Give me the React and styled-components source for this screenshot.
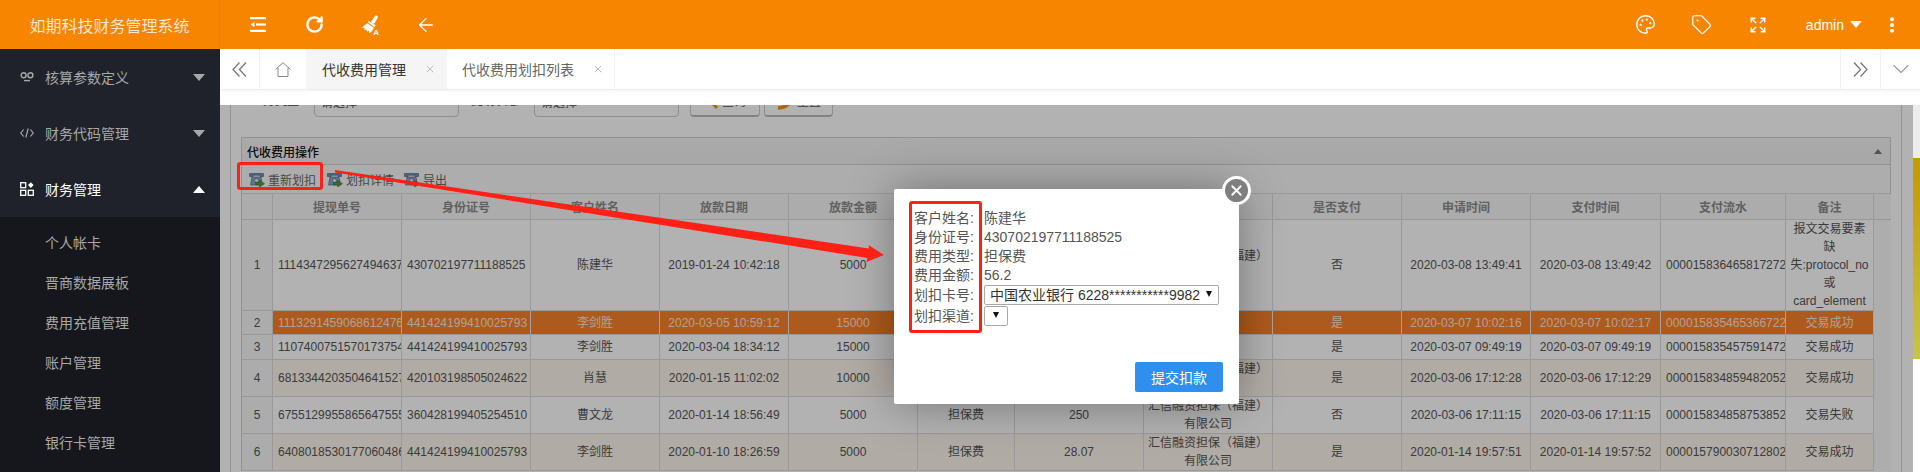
import React from 'react';
import styled, { createGlobalStyle } from 'styled-components';
import { ArrowLeft, RotateCw, Palette, Tag, Expand, EllipsisVertical, X, ChevronDown } from 'lucide-react';

const FONT = '"Liberation Sans", "Noto Sans CJK SC", sans-serif';

const Global = createGlobalStyle`
  html, body { margin: 0; padding: 0; background: #fff; overflow: hidden; }
  * { box-sizing: border-box; }
  body { font-family: ${FONT}; }
`;

const Root = styled.div`
  position: relative;
  width: 1920px;
  height: 472px;
  overflow: hidden;
  display: flex;
  flex-direction: column;
`;

/* ---------- top bar ---------- */
const TopBar = styled.header`
  height: 49px;
  flex: none;
  display: flex;
  align-items: center;
  background: #f88500;
  color: #fff;
`;
const Logo = styled.div`
  width: 220px;
  height: 100%;
  flex: none;
  display: flex;
  align-items: center;
  justify-content: center;
  font-size: 16px;
  color: rgba(255, 255, 255, 0.82);
  border-right: 1px solid #ee8000;
`;
const TopLeft = styled.div`
  display: flex;
  padding-left: 10px;
  flex: 1;
`;
const TopRight = styled.div`
  display: flex;
  align-items: center;
`;
const IconSlot = styled.div`
  width: 56px;
  height: 49px;
  display: flex;
  align-items: center;
  justify-content: center;
`;
const UserBox = styled.div`
  display: flex;
  align-items: center;
  gap: 6px;
  margin-left: 20px;
  padding-right: 2px;
  font-size: 14px;
`;
const Caret = styled.span`
  width: 0;
  height: 0;
  border-left: 6px solid transparent;
  border-right: 6px solid transparent;
  ${p => (p.$up ? `border-bottom: 7px solid ${p.$color};` : `border-top: 7px solid ${p.$color};`)}
`;

/* ---------- body ---------- */
const Body = styled.div`
  flex: 1;
  display: flex;
  min-height: 0;
`;
const Sidebar = styled.nav`
  width: 220px;
  flex: none;
  background: #1f222a;
  overflow: hidden;
`;
const MenuItem = styled.div`
  height: 56px;
  display: flex;
  align-items: center;
  padding: 0 15px 0 20px;
  font-size: 14px;
  color: ${p => (p.$active ? '#fff' : '#a8a8a8')};
`;
const MenuIcon = styled.span`
  width: 25px;
  display: flex;
  align-items: center;
`;
const MenuLabel = styled.span`
  flex: 1;
`;
const SubMenu = styled.div`
  background: #16171c;
  height: 300px;
  padding-top: 5px;
`;
const SubItem = styled.div`
  height: 40px;
  display: flex;
  align-items: center;
  padding-left: 45px;
  font-size: 14px;
  color: #a8a8a8;
`;

const Main = styled.main`
  flex: 1;
  min-width: 0;
  display: flex;
  flex-direction: column;
`;
const TabBar = styled.div`
  height: 41px;
  flex: none;
  display: flex;
  align-items: stretch;
  background: #fff;
  border-bottom: 1px solid #eee;
  box-shadow: 0 1px 2px rgba(0, 0, 0, 0.05);
  position: relative;
  z-index: 1;
`;
const TabBtn = styled.div`
  width: ${p => p.$w}px;
  display: flex;
  align-items: center;
  justify-content: center;
  color: #777;
  ${p => p.$right && 'border-right: 1px solid #f2f2f2;'}
  ${p => p.$left && 'border-left: 1px solid #f2f2f2;'}
`;
const Tab = styled.div`
  display: flex;
  align-items: center;
  gap: 18px;
  padding: 0 ${p => p.$pr}px 0 ${p => p.$pl}px;
  font-size: 14px;
  color: ${p => (p.$active ? '#333' : '#666')};
  background: ${p => (p.$active ? '#f5f5f5' : '#fff')};
  ${p => !p.$active && 'border-right: 1px solid #f2f2f2;'}
`;
const TabSpacer = styled.div`
  flex: 1;
`;
const TabGap = styled.div`
  height: 15px;
  flex: none;
  background: #fff;
`;
const Frame = styled.div`
  flex: 1;
  min-height: 0;
  display: flex;
`;
const Content = styled.div`
  position: relative;
  flex: 1;
  min-width: 0;
  background: #fff;
`;
const Clip = styled.div`
  height: 100%;
  overflow: hidden;
`;
const Page = styled.div`
  margin: 0 11px 0 10px;
  padding: 0 10px;
  height: 480px;
  border-left: 1px solid #d4d4d4;
  border-right: 1px solid #d4d4d4;
`;
const ScrollTrack = styled.div`
  width: 7px;
  flex: none;
  background: linear-gradient(#ececec 53px, #fff 53px);
  overflow: hidden;
`;
const ScrollThumb = styled.div`
  margin-top: 53px;
  height: 201px;
  background: linear-gradient(#c29806, #c6c44f);
`;

/* ---------- search form ---------- */
const SearchRow = styled.div`
  margin-top: -12px;
  height: 24px;
  padding-left: 10px;
  display: flex;
  align-items: flex-start;
`;
const FieldLabel = styled.span`
  width: 48px;
  margin: 1px 15px 0 ${p => p.$ml || 0}px;
  font-size: 12px;
  line-height: 14px;
  color: #444;
`;
const FakeInput = styled.div`
  width: 145px;
  height: 24px;
  padding: 2px 0 0 6px;
  border: 1px solid #ccc;
  border-radius: 4px;
  font-size: 12px;
  line-height: 14px;
  color: #555;
`;
const SearchBtn = styled.div`
  width: ${p => p.$w}px;
  height: 24px;
  margin-left: ${p => p.$ml}px;
  padding-left: ${p => p.$pl}px;
  display: flex;
  gap: 3px;
  border: 1px solid #ccc;
  border-bottom: 2px solid #bbb;
  border-radius: 4px;
  font-size: 12px;
  line-height: 16px;
  color: #555;
`;
const BtnGlyph = styled.svg`
  margin-top: -4px;
  flex: none;
`;

/* ---------- panel ---------- */
const Panel = styled.section`
  margin-top: 20px;
  border: 1px solid #d0d0d0;
  border-bottom: 0;
`;
const PanelTitle = styled.div`
  height: 27px;
  padding: 0 5px 0 5px;
  display: flex;
  align-items: center;
  justify-content: space-between;
  font-size: 12px;
  font-weight: 500;
  color: #111;
  background: linear-gradient(#f4f4f4, #f0f0f0);
  border-bottom: 1px solid #d0d0d0;
`;
const Toolbar = styled.div`
  height: 29px;
  padding-left: 7px;
  display: flex;
  align-items: center;
  font-size: 12px;
  color: #666;
  background: #f8f8f8;
  border-bottom: 1px solid #dcdcdc;
`;
const ToolBtn = styled.div`
  display: flex;
  align-items: center;
  gap: 3px;
  margin-right: ${p => p.$mr}px;
`;
const Grid = styled.table`
  width: 1649px;
  table-layout: fixed;
  border-collapse: separate;
  border-spacing: 0;
  font-size: 12px;
  background: #f8f8f8;
`;
const Th = styled.th`
  height: 26px;
  padding: 0;
  font-weight: 700;
  color: #8c8c8c;
  background: #f7f7f7;
  border-right: 1px solid #dcdcdc;
  border-bottom: 1px solid #dcdcdc;
  &:last-child { border-right: 0; }
`;
const Tr = styled.tr`
  height: ${p => p.$h}px;
`;
const Td = styled.td`
  padding: 0 ${p => p.$left ? '0 0 5px' : '4px'};
  text-align: ${p => (p.$left ? 'left' : 'center')};
  line-height: 18px;
  color: ${p => (p.$sel ? '#ffe6d4' : '#555')};
  background: ${p => (p.$sel ? '#f8812c' : p.$tint ? '#fdf5ec' : '#fff')};
  border-right: 1px solid ${p => (p.$sel ? '#f0e6de' : '#dcdcdc')};
  border-bottom: 1px solid #dcdcdc;
  white-space: ${p => (p.$nowrap ? 'nowrap' : 'normal')};
  overflow: hidden;
`;
const NumCell = styled.td`
  padding: 0;
  text-align: center;
  color: #555;
  background: #f7f7f7;
  border-right: 1px solid #dcdcdc;
  border-bottom: 1px solid #dcdcdc;
`;

/* ---------- mask + modal ---------- */
const Mask = styled.div`
  position: absolute;
  inset: 0;
  background: rgba(0, 0, 0, 0.3);
`;
const Modal = styled.div`
  position: absolute;
  left: 674px;
  top: 84px;
  width: 345px;
  height: 215px;
  padding: 20px 16px 12px 20px;
  display: flex;
  flex-direction: column;
  background: #fff;
  border-radius: 2px;
  box-shadow: 0 0 45px rgba(0, 0, 0, 0.35);
  font-size: 14px;
  color: #555;
`;
const CloseBtn = styled.div`
  position: absolute;
  top: -13px;
  right: -12px;
  width: 29px;
  height: 29px;
  display: flex;
  align-items: center;
  justify-content: center;
  border: 3px solid #fff;
  border-radius: 50%;
  background: #7f7f7f;
  color: #fff;
`;
const InfoRow = styled.div`
  min-height: 19px;
  display: flex;
  align-items: center;
  line-height: 19px;
  margin-bottom: ${p => (p.$select ? 1 : 0)}px;
`;
const InfoLabel = styled.span`
  width: 70px;
  flex: none;
`;
const SelectBox = styled.div`
  width: ${p => p.$w}px;
  height: 20px;
  padding: 0 6px 0 5px;
  display: flex;
  align-items: center;
  justify-content: ${p => (p.$empty ? 'center' : 'space-between')};
  border: 1px solid #aaa;
  border-radius: 2px;
  color: #333;
  white-space: nowrap;
`;
const SelectArrow = styled.span`
  width: 0;
  height: 0;
  margin-top: -2px;
  border-left: 3.5px solid transparent;
  border-right: 3.5px solid transparent;
  border-top: 6px solid #111;
`;
const ModalFooter = styled.div`
  margin-top: auto;
  display: flex;
  justify-content: flex-end;
`;
const SubmitBtn = styled.div`
  width: 88px;
  height: 30px;
  display: flex;
  align-items: center;
  justify-content: center;
  border-radius: 2px;
  background: #2f8fee;
  color: #fff;
`;

/* ---------- annotations ---------- */
const RedBox = styled.div`
  position: absolute;
  left: ${p => p.$x}px;
  top: ${p => p.$y}px;
  width: ${p => p.$w}px;
  height: ${p => p.$h}px;
  border: 3px solid #ff2116;
  border-radius: 3px;
  pointer-events: none;
`;
const ArrowLayer = styled.svg`
  position: absolute;
  left: 0;
  top: 0;
  pointer-events: none;
`;

/* ---------- drawn icons ---------- */
const IndentIcon = () => (
  <svg width="16" height="15" viewBox="0 0 16 15" fill="#fff">
    <rect x="0" y="0" width="16" height="2.2" />
    <rect x="6" y="6.4" width="10" height="2.2" />
    <rect x="0" y="12.8" width="16" height="2.2" />
    <path d="M0.5 7.5 L4.5 4.8 V10.2 Z" />
  </svg>
);
const BrushIcon = () => (
  <svg width="20" height="20" viewBox="0 0 20 20" fill="#fff">
    <path d="M11 7 L14.6 1.4 a1.7 1.7 0 0 1 2.9 1.8 L14 8.9 Z" />
    <path d="M8.9 5.9 L15.6 10.3 L14.5 12 L7.8 7.6 Z" />
    <path d="M7.2 8.2 L14 12.7 L12 16.2 L9.4 18.2 L8.6 15.2 L7.2 17 L6.2 14.2 L4.4 15.2 L4.4 12.6 L1.4 13 Z" />
    <text x="13.2" y="19.8" fontSize="8" fontWeight="700" fontFamily="Liberation Sans, sans-serif">A</text>
  </svg>
);
const LoopIcon = () => (
  <svg width="14" height="10" viewBox="0 0 14 10" fill="none" stroke="currentColor" strokeWidth="1.4">
    <circle cx="3.6" cy="3.2" r="2.5" />
    <circle cx="10.4" cy="3.2" r="2.5" />
    <path d="M4 8.6 H10" />
  </svg>
);
const CodeIcon = () => (
  <svg width="14" height="10" viewBox="0 0 14 10" fill="none" stroke="currentColor" strokeWidth="1.2">
    <path d="M3.6 1.5 L0.8 5 L3.6 8.5 M10.4 1.5 L13.2 5 L10.4 8.5 M8.2 0.5 L5.8 9.5" />
  </svg>
);
const AppsIcon = () => (
  <svg width="14" height="14" viewBox="0 0 14 14" fill="none" stroke="currentColor" strokeWidth="1.3">
    <rect x="0.7" y="0.7" width="5" height="5" />
    <rect x="0.7" y="8.3" width="5" height="5" />
    <rect x="8.3" y="8.3" width="5" height="5" />
    <path d="M10.8 0.3 L13.6 3.1 L10.8 5.9 L8 3.1 Z" fill="currentColor" stroke="none" />
  </svg>
);
const HomeIcon = () => (
  <svg width="16" height="15" viewBox="0 0 16 15" fill="none" stroke="#888" strokeWidth="1">
    <path d="M0.5 7.5 L8 0.7 L15.5 7.5 M3 6 V14.5 H13 V6" />
  </svg>
);
const DoubleChevron = ({ flip }) => (
  <svg width="15" height="15" viewBox="0 0 15 15" fill="none" stroke="#777" strokeWidth="1.3" style={flip ? { transform: 'scaleX(-1)' } : undefined}>
    <path d="M7.5 0.5 L1 7.5 L7.5 14.5 M14 0.5 L7.5 7.5 L14 14.5" />
  </svg>
);
const PhoneIcon = () => (
  <svg width="16" height="15" viewBox="0 0 16 15">
    <path d="M0.5 1.5 H14.5 V4.5 H11 V3.2 H4 V4.5 H0.5 Z" fill="#6f93b5" stroke="#3f5f80" strokeWidth="0.6" />
    <path d="M3 5 H12 L13.5 13 H1.5 Z" fill="#8aa7c4" stroke="#3f5f80" strokeWidth="0.6" />
    <circle cx="7.5" cy="8.5" r="2" fill="#dfe9f2" stroke="#3f5f80" strokeWidth="0.5" />
    <path d="M6.5 10.5 H10.5 V8.2 L15.5 11.7 L10.5 15 V12.9 H6.5 Z" fill="#5d9a3c" stroke="#2f6a1f" strokeWidth="0.5" />
  </svg>
);
const SearchGlyph = () => (
  <BtnGlyph width="20" height="20" viewBox="0 0 20 20" fill="none" stroke="#f09a00" strokeWidth="3">
    <circle cx="8" cy="7" r="6" />
    <path d="M12 11.5 L18 18" />
  </BtnGlyph>
);
const ResetGlyph = () => (
  <BtnGlyph width="18" height="20" viewBox="0 0 18 20" fill="none" stroke="#f09a00" strokeWidth="3.5">
    <path d="M13 1 C18 8 15 17 2 18" />
  </BtnGlyph>
);
const TitleCaret = styled.span`
  width: 0;
  height: 0;
  margin-right: 3px;
  border-left: 4px solid transparent;
  border-right: 4px solid transparent;
  border-bottom: 5px solid #777;
`;

/* ---------- data ---------- */
const WIDTHS = [31, 129, 129, 129, 129, 129, 97, 129, 129, 129, 129, 130, 125, 88, 17];
const HEADS = ['', '提现单号', '身份证号', '客户姓名', '放款日期', '放款金额', '费用类型', '费用金额', '担保公司', '是否支付', '申请时间', '支付时间', '支付流水', '备注', ''];
const CO = '汇信融资担保（福建）有限公司';
const ROWS = [
  { h: 91, c: ['11143472956274946371', '430702197711188525', '陈建华', '2019-01-24 10:42:18', '5000', '担保费', '56.2', CO, '否', '2020-03-08 13:49:41', '2020-03-08 13:49:42', '00001583646581727241', '报文交易要素缺失:protocol_no或card_element'] },
  { h: 24, sel: true, c: ['11132914590686124761', '441424199410025793', '李剑胜', '2020-03-05 10:59:12', '15000', '担保费', '150', '', '是', '2020-03-07 10:02:16', '2020-03-07 10:02:17', '00001583546536672211', '交易成功'] },
  { h: 25, c: ['11074007515701737541', '441424199410025793', '李剑胜', '2020-03-04 18:34:12', '15000', '担保费', '150', '', '是', '2020-03-07 09:49:19', '2020-03-07 09:49:19', '00001583545759147211', '交易成功'] },
  { h: 37, tint: true, c: ['68133442035046415271', '420103198505024622', '肖慧', '2020-01-15 11:02:02', '10000', '担保费', '100', CO, '是', '2020-03-06 17:12:28', '2020-03-06 17:12:29', '00001583485948205211', '交易成功'] },
  { h: 37, c: ['67551299558656475551', '360428199405254510', '曹文龙', '2020-01-14 18:56:49', '5000', '担保费', '250', CO, '否', '2020-03-06 17:11:15', '2020-03-06 17:11:15', '00001583485875385211', '交易失败'] },
  { h: 37, tint: true, c: ['64080185301770604861', '441424199410025793', '李剑胜', '2020-01-10 18:26:59', '5000', '担保费', '28.07', CO, '是', '2020-01-14 19:57:51', '2020-01-14 19:57:52', '00001579003071280211', '交易成功'] },
];
const MENU = [
  { label: '核算参数定义', Icon: LoopIcon },
  { label: '财务代码管理', Icon: CodeIcon },
  { label: '财务管理', Icon: AppsIcon, active: true },
];
const SUBS = ['个人帐卡', '晋商数据展板', '费用充值管理', '账户管理', '额度管理', '银行卡管理'];
const INFO = [
  ['客户姓名:', '陈建华'],
  ['身份证号:', '430702197711188525'],
  ['费用类型:', '担保费'],
  ['费用金额:', '56.2'],
];
const LEFT_COLS = new Set([0, 1, 11]);
const NOWRAP_COLS = new Set([0, 1, 3, 9, 10, 11]);

export default function App() {
  return (
    <Root>
      <Global />
      <TopBar>
        <Logo>如期科技财务管理系统</Logo>
        <TopLeft>
          <IconSlot><IndentIcon /></IconSlot>
          <IconSlot><RotateCw size={19} strokeWidth={3} /></IconSlot>
          <IconSlot><BrushIcon /></IconSlot>
          <IconSlot><ArrowLeft size={22} strokeWidth={1.4} /></IconSlot>
        </TopLeft>
        <TopRight>
          <IconSlot><Palette size={21} strokeWidth={1.6} /></IconSlot>
          <IconSlot><Tag size={21} strokeWidth={1.4} /></IconSlot>
          <IconSlot><Expand size={18} strokeWidth={1.8} /></IconSlot>
          <UserBox>admin<Caret $color="#fff" /></UserBox>
          <IconSlot><EllipsisVertical size={20} strokeWidth={2.8} /></IconSlot>
        </TopRight>
      </TopBar>
      <Body>
        <Sidebar>
          {MENU.map(({ label, Icon, active }) => (
            <MenuItem key={label} $active={active}>
              <MenuIcon><Icon /></MenuIcon>
              <MenuLabel>{label}</MenuLabel>
              <Caret $up={active} $color={active ? '#fff' : '#a8a8a8'} />
            </MenuItem>
          ))}
          <SubMenu>
            {SUBS.map(s => <SubItem key={s}>{s}</SubItem>)}
          </SubMenu>
        </Sidebar>
        <Main>
          <TabBar>
            <TabBtn $w={40} $right><DoubleChevron /></TabBtn>
            <TabBtn $w={46}><HomeIcon /></TabBtn>
            <Tab $active $pl={16} $pr={11}>代收费用管理<X size={12} color="#bbb" /></Tab>
            <Tab $pl={15} $pr={10}>代收费用划扣列表<X size={12} color="#bbb" /></Tab>
            <TabSpacer />
            <TabBtn $w={40} $left><DoubleChevron flip /></TabBtn>
            <TabBtn $w={40} $left><ChevronDown size={28} strokeWidth={0.9} /></TabBtn>
          </TabBar>
          <TabGap />
          <Frame>
            <Content>
              <Clip>
                <Page>
                  <SearchRow>
                    <FieldLabel>业务类型</FieldLabel>
                    <FakeInput>请选择</FakeInput>
                    <FieldLabel $ml={12}>提现状态</FieldLabel>
                    <FakeInput>请选择</FakeInput>
                    <SearchBtn $w={70} $ml={11} $pl={8}><SearchGlyph />查询</SearchBtn>
                    <SearchBtn $w={69} $ml={4} $pl={11}><ResetGlyph />重置</SearchBtn>
                  </SearchRow>
                  <Panel>
                    <PanelTitle>代收费用操作<TitleCaret /></PanelTitle>
                    <Toolbar>
                      <ToolBtn $mr={11}><PhoneIcon />重新划扣</ToolBtn>
                      <ToolBtn $mr={10}><PhoneIcon />划扣详情</ToolBtn>
                      <ToolBtn $mr={0}><PhoneIcon />导出</ToolBtn>
                    </Toolbar>
                    <Grid>
                      <colgroup>
                        {WIDTHS.map((w, i) => <col key={i} width={w} />)}
                      </colgroup>
                      <thead>
                        <tr>{HEADS.map((h, i) => <Th key={i}>{h}</Th>)}</tr>
                      </thead>
                      <tbody>
                        {ROWS.map((r, i) => (
                          <Tr key={i} $h={r.h}>
                            <NumCell>{i + 1}</NumCell>
                            {r.c.map((v, j) => (
                              <Td key={j} $sel={r.sel} $tint={r.tint} $left={LEFT_COLS.has(j)} $nowrap={NOWRAP_COLS.has(j)}>{v}</Td>
                            ))}
                          </Tr>
                        ))}
                      </tbody>
                    </Grid>
                  </Panel>
                </Page>
              </Clip>
              <Mask />
              <Modal>
                <CloseBtn><X size={17} strokeWidth={2.6} /></CloseBtn>
                {INFO.map(([k, v]) => (
                  <InfoRow key={k}><InfoLabel>{k}</InfoLabel>{v}</InfoRow>
                ))}
                <InfoRow $select>
                  <InfoLabel>划扣卡号:</InfoLabel>
                  <SelectBox $w={235}>中国农业银行 6228***********9982<SelectArrow /></SelectBox>
                </InfoRow>
                <InfoRow $select>
                  <InfoLabel>划扣渠道:</InfoLabel>
                  <SelectBox $w={24} $empty><SelectArrow /></SelectBox>
                </InfoRow>
                <ModalFooter><SubmitBtn>提交扣款</SubmitBtn></ModalFooter>
              </Modal>
            </Content>
            <ScrollTrack><ScrollThumb /></ScrollTrack>
          </Frame>
        </Main>
      </Body>
      <RedBox $x={237} $y={162} $w={86} $h={28} />
      <RedBox $x={909} $y={201} $w={73} $h={132} />
      <ArrowLayer width="1920" height="472" viewBox="0 0 1920 472">
        <path d="M335 170 L869 248.5 L868.6 245 L884 255 L866.5 262 L867.5 258 L335 172.5 Z" fill="#ff2116" />
      </ArrowLayer>
    </Root>
  );
}
